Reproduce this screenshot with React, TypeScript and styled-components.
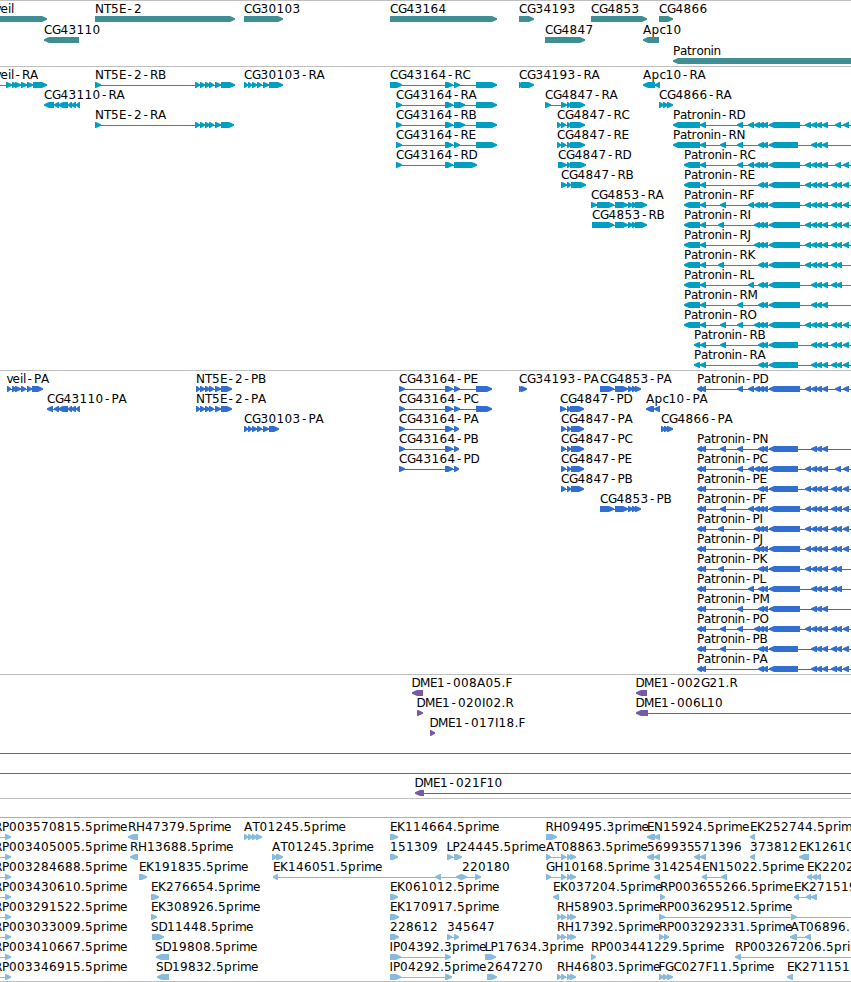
import React from "react";
import styled, { createGlobalStyle } from "styled-components";

type Span = [number, number];
type Direction = "left" | "right";

interface Feature {
  row: number;
  x: number;
  label?: string;
  dir: Direction;
  parts: Span[];
  line?: Span;
}

interface TrackData {
  id: string;
  color: string;
  height: number;
  pitch: number;
  features: Feature[];
}

const PAGE_WIDTH = 851;
const EDGE = 860;

const GlobalStyle = createGlobalStyle`
  body {
    margin: 0;
    background: #ffffff;
    overflow: hidden;
  }
`;

const Browser = styled.main`
  display: flex;
  flex-direction: column;
  width: ${PAGE_WIDTH}px;
  height: 982px;
  overflow: hidden;
  background: #ffffff;
  border-bottom: 1px solid #bfbfbf;
  box-sizing: border-box;
`;

const TrackPanel = styled.section<{ $height: number }>`
  flex: none;
  height: ${({ $height }) => $height}px;
  border-top: 1px solid #bfbfbf;
  box-sizing: border-box;
  overflow: hidden;
`;

const TrackCanvas = styled.svg`
  display: block;
  width: 100%;
  height: 100%;
`;

const Glyphs = styled.g<{ $color: string }>`
  fill: ${({ $color }) => $color};
`;

const FeatureLabel = styled.text`
  font-family: "DejaVu Sans", "Liberation Sans", sans-serif;
  font-size: 12px;
  fill: #000000;
  white-space: pre;
`;

const ADVANCE: Record<string, number> = {
  ".": 4, "-": 8, A: 8.5, B: 8, C: 8, D: 8.5, E: 7, F: 6.5, G: 8.5, H: 9, I: 3.5, J: 4,
  K: 8, L: 6, M: 10, N: 9, O: 9, P: 7, R: 8, S: 7.5, T: 7,
  a: 7, c: 6, e: 7.5, i: 3, l: 3, m: 11, n: 7, o: 7, p: 8, r: 5, t: 4.5, v: 6,
};

/** Pen positions for every character of a label; dashes are centred in their cell. */
const penPositions = (label: string, start: number) => {
  let pen = start;
  return Array.from(label, (ch) => {
    const at = ch === "-" ? pen + 1.5 : pen;
    pen += ADVANCE[ch] ?? 8;
    return at;
  }).join(" ");
};

const fwd = (row: number, label: string, parts: Span[], x = parts[0][0], line?: Span): Feature => ({
  row, label, parts, x, line, dir: "right",
});
const rev = (row: number, label: string, parts: Span[], x = parts[0][0], line?: Span): Feature => ({
  row, label, parts, x, line, dir: "left",
});
const rule = (row: number): Feature => ({ row, x: 0, dir: "right", parts: [], line: [0, EDGE] });

const genes: Feature[] = [
  fwd(0, "veil", [[-10, 47]], -5.5),
  fwd(0, "NT5E-2", [[95, 235]]),
  fwd(0, "CG30103", [[244, 283]]),
  fwd(0, "CG43164", [[390, 497]]),
  fwd(0, "CG34193", [[519, 534]]),
  fwd(0, "CG4853", [[591, 647]]),
  fwd(0, "CG4866", [[659, 673]]),
  rev(1, "CG43110", [[44, 79]]),
  fwd(1, "CG4847", [[545, 585]]),
  rev(1, "Apc10", [[643, 659]]),
  rev(2, "Patronin", [[673, EDGE]]),
];

const nt5e: Span[] = [[195, 200], [200, 205], [205, 210], [209, 214], [215, 221]];
const cg30103: Span[] = [[244, 248], [248, 252], [252, 257], [257, 262], [263, 269]];
const cg43110: Span[] = [[54, 59], [58, 68], [68, 72], [71, 76], [76, 80]];
const cg4853: Span[] = [[615, 628], [628, 633], [632, 637]];

/** Patronin isoforms share one large exon, with a varying set of small ones. */
const patronin = (row: number, name: string, lead: Span[], bigStart: number, bigEnd: number, small: number[]) =>
  rev(
    row,
    `Patronin-${name}`,
    [...lead, [700, 706] as Span, [bigStart, bigEnd] as Span, ...small.map((s): Span => [s, s + 6])],
    lead[0][0],
    [lead[0][0] + 3, EDGE],
  );

const A = [805, 811, 816, 822];
const B = [811, 816, 822];
const C = [831, 836, 843];
const D = [835, 843];
const F3 = [754, 758, 762];
const F2 = [758, 762];

const transcriptLead = (n: string): Span[] =>
  n === "RD" || n === "RN" ? [[673, 700]] : n === "RB" || n === "RA" ? [[694, 700]] : [[684, 700]];

const transcriptIsoforms: [string, number, number[]][] = [
  ["RD", 800, [737, 748, ...F3, ...A, ...D]],
  ["RN", 798, [720, 737, ...F2, ...B]],
  ["RC", 800, [737, 748, ...F3, ...A, ...D]],
  ["RE", 800, [...F2, ...A, ...C]],
  ["RF", 800, [720, 748, ...F3, ...A, ...C]],
  ["RI", 800, [718, ...F3, ...A, ...C]],
  ["RJ", 800, [...F3, ...A, ...C]],
  ["RK", 800, [718, ...F2, ...A, 831, 836]],
  ["RL", 800, [748, ...F2, ...B, 831, 836]],
  ["RM", 800, [737, ...F2, ...B]],
  ["RO", 800, [720, 737, ...F3, ...A, ...C]],
  ["RB", 798, [720, ...F2, ...B, ...C]],
  ["RA", 798, [...F2, ...B, ...C]],
];

const proteinIsoforms: [number, string, number, number[]][] = [
  [0, "PD", 800, [737, 748, ...F3, ...A, ...D]],
  [3, "PN", 798, [720, 737, ...F2, ...B]],
  [4, "PC", 798, [737, 748, ...F3, ...A, ...D]],
  [5, "PE", 798, [...F2, ...A, ...C]],
  [6, "PF", 800, [720, 748, ...F3, ...A, ...C]],
  [7, "PI", 800, [718, ...F3, ...A, ...C]],
  [8, "PJ", 800, [...F3, ...A, ...C]],
  [9, "PK", 800, [718, ...F2, ...A, 831, 836]],
  [10, "PL", 800, [748, ...F2, ...B, 831, 836]],
  [11, "PM", 800, [737, ...F2, ...B]],
  [12, "PO", 800, [720, 737, ...F3, ...A, ...C]],
  [13, "PB", 798, [720, ...F2, ...B, ...C]],
  [14, "PA", 798, [...F2, ...B, ...C]],
];

const transcripts: Feature[] = [
  fwd(0, "veil-RA", [[-12, -8], [6, 12], [12, 17], [15, 21], [21, 27], [27, 33], [33, 47]], -5.5),
  fwd(0, "NT5E-2-RB", [[95, 101], ...nt5e, [221, 235]]),
  fwd(0, "CG30103-RA", [...cg30103, [269, 283]]),
  fwd(0, "CG43164-RC", [[390, 402], [445, 453], [454, 460], [476, 497]]),
  fwd(0, "CG34193-RA", [[519, 522], [521, 534]]),
  rev(0, "Apc10-RA", [[643, 655], [655, 660]]),
  rev(1, "CG43110-RA", [[44, 54], ...cg43110]),
  fwd(1, "CG43164-RA", [[396, 402], [445, 453], [454, 465], [476, 497]]),
  fwd(1, "CG4847-RA", [[545, 551], [561, 567], [567, 571], [570, 585]]),
  fwd(1, "CG4866-RA", [[659, 664], [663, 668], [667, 673]]),
  fwd(2, "NT5E-2-RA", [[95, 101], ...nt5e, [221, 234]]),
  fwd(2, "CG43164-RB", [[396, 402], [445, 453], [454, 465], [476, 497]]),
  fwd(2, "CG4847-RC", [[557, 561], [561, 566], [567, 571], [570, 585]]),
  fwd(3, "CG43164-RE", [[396, 402], [445, 453], [454, 460], [476, 497]]),
  fwd(3, "CG4847-RE", [[557, 561], [561, 566], [567, 571], [570, 585]]),
  fwd(4, "CG43164-RD", [[396, 402], [445, 453], [454, 477]]),
  fwd(4, "CG4847-RD", [[558, 567], [567, 571], [570, 586]]),
  fwd(5, "CG4847-RB", [[561, 567], [567, 571], [571, 586]]),
  fwd(6, "CG4853-RA", [[591, 597], [597, 614], ...cg4853, [635, 647]]),
  fwd(7, "CG4853-RB", [[592, 614], ...cg4853, [635, 647]]),
  ...transcriptIsoforms.map(([name, end, small], i) =>
    patronin(i + 2, name, transcriptLead(name), 769, end, small),
  ),
];

const proteins: Feature[] = [
  fwd(0, "veil-PA", [[7, 11], [12, 17], [15, 21], [21, 26], [27, 32], [32, 43]], 6.5),
  fwd(0, "NT5E-2-PB", [[196, 200], ...nt5e.slice(1), [221, 232]]),
  fwd(0, "CG43164-PE", [[399, 405], [445, 453], [454, 460], [476, 492]]),
  fwd(0, "CG34193-PA", [[519, 523], [521, 527]]),
  fwd(0, "CG4853-PA", [[600, 614], ...cg4853, [635, 641]]),
  rev(1, "CG43110-PA", [[47, 53], ...cg43110]),
  fwd(1, "NT5E-2-PA", [[196, 200], ...nt5e.slice(1), [221, 232]]),
  fwd(1, "CG43164-PC", [[399, 405], [445, 453], [454, 460], [476, 492]]),
  fwd(1, "CG4847-PD", [[560, 566], [567, 571], [570, 584]]),
  rev(1, "Apc10-PA", [[646, 654], [654, 660]]),
  fwd(2, "CG30103-PA", [...cg30103, [269, 279]]),
  fwd(2, "CG4866-PA", [[661, 665], [664, 669], [667, 673]]),
  ...["PA", "PB", "PD"].map((n, i) => fwd(i + 2, `CG43164-${n}`, [[399, 405], [445, 453], [454, 459]])),
  ...["PA", "PC", "PE", "PB"].map((n, i) => fwd(i + 2, `CG4847-${n}`, [[561, 566], [567, 571], [571, 584]])),
  fwd(6, "CG4853-PB", [[600, 614], ...cg4853, [635, 641]]),
  ...proteinIsoforms.map(([row, name, end, small]) => patronin(row, name, [[697, 702]], 769, end, small)),
];

const clones: Feature[] = [
  rev(0, "DME1-008A05.F", [[412, 423]], 411.5),
  rev(0, "DME1-002G21.R", [[636, 647]], 635.5),
  fwd(1, "DME1-020I02.R", [[417, 423]], 416.5),
  rev(1, "DME1-006L10", [[636, 648]], 635.5, [640, EDGE]),
  fwd(2, "DME1-017I18.F", [[430, 435]], 429.5),
  rule(3),
  rule(4),
  rev(5, "DME1-021F10", [[415, 424]], 414.5, [420, EDGE]),
];

const cdnaTriple: Span[] = [[557, 561], [561, 566], [567, 571], [570, 576]];
const cdnaSplit: Span[] = [[546, 551], [561, 566], [567, 571], [570, 576]];

const cdnas: Feature[] = [
  rule(0),
  ...["3570815", "3405005", "3284688", "3430610", "3291522", "3033009", "3410667", "3346915"].map((n, i) =>
    fwd(i + 1, `RP00${n}.5prime`, [[5, 11]], -6, [0, 8]),
  ),
  rev(1, "RH47379.5prime", [[128, 138]]),
  fwd(1, "AT01245.5prime", [[244, 248], [248, 253], [252, 257], [256, 262]]),
  fwd(1, "EK114664.5prime", [[390, 398]]),
  fwd(1, "RH09495.3prime", [[546, 557]], 545.5),
  rev(1, "EN15924.5prime", [[647, 655], [654, 660]]),
  rev(1, "EK252744.5prime", [[750, 755]]),
  rev(2, "RH13688.5prime", [[130, 138]]),
  fwd(2, "AT01245.3prime", [[272, 277], [276, 283]]),
  fwd(2, "151309", [[390, 398]]),
  fwd(2, "LP24445.5prime", [[447, 453], [454, 462]], 446.5),
  fwd(2, "AT08863.5prime", cdnaSplit),
  rev(2, "569935", [[647, 654], [654, 660]]),
  rev(2, "571396", [[694, 700], [700, 706]]),
  rev(2, "373812", [[750, 755]]),
  rev(2, "EK12610", [[799, 809]]),
  fwd(3, "EK191835.5prime", [[139, 147]]),
  rev(3, "EK146051.5prime", [[273, 278], [435, 441], [456, 462]], 273),
  fwd(3, "220180", [[461, 467], [475, 481]], 462),
  fwd(3, "GH10168.5prime", cdnaSplit),
  rev(3, "314254", [[654, 660]], 653.5),
  rev(3, "EN15022.5prime", [[702, 707], [721, 727]]),
  rev(3, "EK2202", [[807, 812], [812, 817], [816, 821]]),
  fwd(4, "EK276654.5prime", [[151, 159]]),
  fwd(4, "EK061012.5prime", [[390, 398]]),
  rev(4, "EK037204.5prime", [[553, 559]]),
  fwd(4, "RP003655266.5prime", [[660, 665]]),
  rev(4, "EK271519", [[794, 799], [806, 811], [811, 817]]),
  fwd(5, "EK308926.5prime", [[151, 157]]),
  fwd(5, "EK170917.5prime", [[390, 399]]),
  fwd(5, "RH58903.5prime", cdnaTriple),
  fwd(5, "RP003629512.5prime", [[659, 665], [791, 797]], 659, [660, EDGE]),
  fwd(6, "SD11448.5prime", [[152, 164]], 151),
  fwd(6, "228612", [[390, 399]]),
  fwd(6, "345647", [[447, 452], [454, 459]]),
  fwd(6, "RH17392.5prime", cdnaTriple),
  fwd(6, "RP003292331.5prime", [[659, 664], [664, 669]]),
  rev(6, "AT06896.", [[790, 797], [805, 811]], 790.5),
  rev(7, "SD19808.5prime", [[156, 169]], 155),
  fwd(7, "IP04392.3prime", [[390, 401], [445, 451]], 389.5),
  fwd(7, "LP17634.3prime", [[485, 496]], 484.5),
  fwd(7, "RP003441229.5prime", [[591, 596]]),
  rev(7, "RP003267206.5prime", [[735, 741]], 735, [738, EDGE]),
  rev(8, "SD19832.5prime", [[157, 169]], 156),
  fwd(8, "IP04292.5prime", [[390, 401], [445, 452]], 389.5),
  fwd(8, "2647270", [[487, 497]]),
  fwd(8, "RH46803.5prime", cdnaTriple),
  fwd(8, "FGC027F11.5prime", [[659, 664], [663, 668], [667, 673]], 658.5),
  rev(8, "EK271151", [[787, 793]]),
];

const tracks: TrackData[] = [
  { id: "genes", color: "#3f8e94", height: 66, pitch: 21, features: genes },
  { id: "transcripts", color: "#009fc1", height: 304, pitch: 20, features: transcripts },
  { id: "proteins", color: "#326ecf", height: 304, pitch: 20, features: proteins },
  { id: "clones", color: "#7859a7", height: 124, pitch: 20, features: clones },
  { id: "cdnas", color: "#87bbde", height: 183, pitch: 20, features: cdnas },
];

/** Exon box ending in a tapered head; short exons are drawn as the head alone. */
const arrowPath = ([a, b]: Span, dir: Direction, top: number) => {
  const head = Math.min(6, b - a);
  return dir === "right"
    ? `M${a} ${top}H${b - head + 1}L${b} ${top + 2.2}V${top + 3.8}L${b - head + 1} ${top + 6}H${a}Z`
    : `M${b} ${top}H${a + head - 1}L${a} ${top + 2.2}V${top + 3.8}L${a + head - 1} ${top + 6}H${b}Z`;
};

const connector = ({ parts, line }: Feature): Span | null => {
  if (line) return line;
  if (parts.length < 2) return null;
  return [parts[0][0] + 1, parts[parts.length - 1][1] - 1];
};

function FeatureGlyph({ feature, pitch }: { feature: Feature; pitch: number }) {
  const top = 15 + feature.row * pitch;
  const link = connector(feature);
  return (
    <>
      {link && <rect x={link[0]} y={top + 3} width={link[1] - link[0]} height={1} />}
      {feature.parts.map((part, i) => (
        <path key={i} d={arrowPath(part, feature.dir, top)} />
      ))}
    </>
  );
}

function Track({ track }: { track: TrackData }) {
  return (
    <TrackPanel $height={track.height}>
      <TrackCanvas>
        <Glyphs $color={track.color}>
          {track.features.map((f, i) => (
            <FeatureGlyph key={i} feature={f} pitch={track.pitch} />
          ))}
        </Glyphs>
        {track.features.map(
          (f, i) =>
            f.label && (
              <FeatureLabel key={i} x={penPositions(f.label, f.x)} y={12 + f.row * track.pitch}>
                {f.label}
              </FeatureLabel>
            ),
        )}
      </TrackCanvas>
    </TrackPanel>
  );
}

export default function App() {
  return (
    <>
      <GlobalStyle />
      <Browser>
        {tracks.map((t) => (
          <Track key={t.id} track={t} />
        ))}
      </Browser>
    </>
  );
}
